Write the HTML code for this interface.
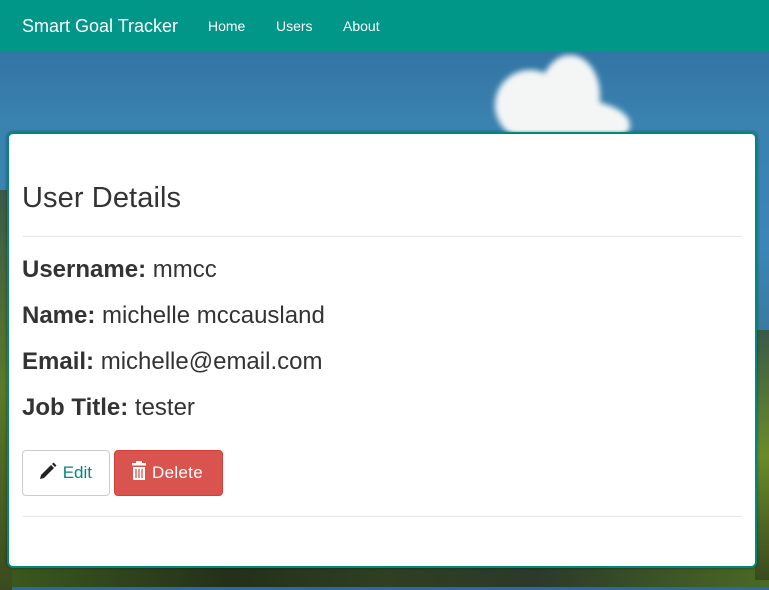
<!DOCTYPE html>
<html><head><style>
*{margin:0;padding:0;box-sizing:border-box}
body{width:769px;height:587px;overflow:hidden;font-family:"Liberation Sans",Arial,sans-serif;position:relative;
background:linear-gradient(180deg,#2d6a9a 0px,#3a82b0 120px,#3a86b4 250px,#3b7aa0 330px,#2f5a4a 420px,#2a3a20 500px,#3a4a1e 587px);}
.nav{position:absolute;left:0;top:0;width:769px;height:51px;background:#009688;color:#fff}
.brand{position:absolute;left:22px;top:16px;font-size:18px}
.nav a{position:absolute;top:18px;font-size:14px;color:#fff}
.cloud{position:absolute;border-radius:50%;background:#f4f6f6;filter:blur(3px)}
.trees{position:absolute;left:0;right:0}
.card{position:absolute;left:7px;top:132px;width:750px;height:436px;background:#fff;border:2px solid #00897b;border-radius:6px;box-shadow:0 0 3px rgba(0,0,0,.4)}
h2{position:absolute;left:13px;top:48px;font-size:29px;font-weight:normal;color:#333;letter-spacing:0.1px}
.hr{position:absolute;left:14px;width:719px;height:1px;background:#e6e6e6}
p{position:absolute;left:13px;font-size:24px;color:#333}
.btn{position:absolute;top:316px;height:46px;border-radius:4px;font-size:17px;line-height:44px}
</style></head><body>
<div class="cloud" style="left:495px;top:70px;width:70px;height:70px"></div>
<div class="cloud" style="left:540px;top:55px;width:60px;height:80px"></div>
<div class="cloud" style="left:520px;top:100px;width:110px;height:50px"></div>
<div class="trees" style="top:500px;height:87px;background:linear-gradient(90deg,#3c5a1e,#24301a 30%,#2e3f22 50%,#2b3a2a 70%,#4a6a24)"></div>
<div class="trees" style="left:0;width:12px;top:190px;height:400px;background:linear-gradient(180deg,#3a5a4a,#5a7a2a,#3a4a1e)"></div>
<div class="trees" style="left:755px;width:14px;top:330px;height:250px;background:linear-gradient(180deg,#3a5a4a,#6a8a2a,#3a4a1e)"></div>
<div class="nav"><span class="brand">Smart Goal Tracker</span><a style="left:208px">Home</a><a style="left:276px">Users</a><a style="left:343px">About</a></div>
<div class="card">
<h2>User Details</h2>
<div class="hr" style="top:102px"></div>
<p style="top:122px"><b>Username:</b> mmcc</p>
<p style="top:168px"><b>Name:</b> michelle mccausland</p>
<p style="top:214px"><b>Email:</b> michelle@email.com</p>
<p style="top:260px"><b>Job Title:</b> tester</p>
<div class="btn" style="left:13px;width:88px;border:1px solid #ccc;color:#00897b;padding-left:15px">
<svg width="20" height="18" viewBox="0 0 20 18" style="vertical-align:-2px"><path d="M2 17 L3 13 L13 3 L16 6 L6 16 Z" fill="#222"/><path d="M14 2 L15.5 0.5 L18.5 3.5 L17 5 Z" fill="#222"/></svg> Edit</div>
<div class="btn" style="left:105px;width:109px;background:#d9534f;border:1px solid #d43f3a;color:#fff;padding-left:16px;letter-spacing:0.3px">
<svg width="16" height="20" viewBox="0 0 16 20" style="vertical-align:-3px"><rect x="5" y="0" width="6" height="2" fill="#fff"/><rect x="1" y="2" width="14" height="2.5" fill="#fff"/><path d="M2 6h12v13H2z" fill="#fff"/><path d="M5 8v9M8 8v9M11 8v9" stroke="#d9534f" stroke-width="1.3"/></svg> Delete</div>
<div class="hr" style="top:382px"></div>
</div>
</body></html>
